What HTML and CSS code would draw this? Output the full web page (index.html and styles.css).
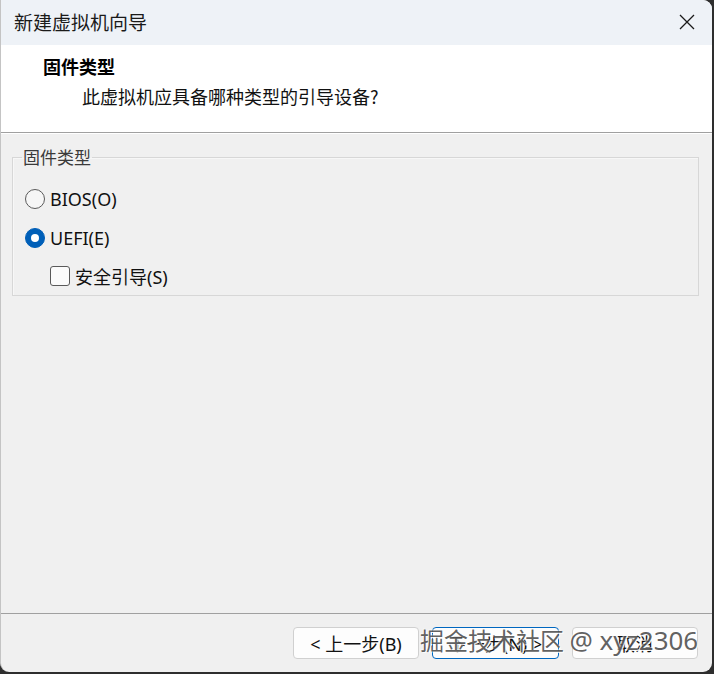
FILE: index.html
```html
<!DOCTYPE html>
<html lang="zh-CN">
<head>
<meta charset="utf-8">
<title>新建虚拟机向导</title>
<link rel="stylesheet" href="styles.css">
</head>
<body>
<div class="window">
  <div class="titlebar">
    <span class="title">新建虚拟机向导</span>
    <svg class="close" width="16" height="16" viewBox="0 0 16 16"><path d="M1 1 L15 15 M15 1 L1 15" stroke="#1a1a1a" stroke-width="1.3" fill="none"/></svg>
  </div>
  <div class="header">
    <h1 class="h-title">固件类型</h1>
    <p class="h-sub">此虚拟机应具备哪种类型的引导设备?</p>
  </div>
  <div class="content">
    <fieldset class="group">
      <legend class="legend">固件类型</legend>
      <div class="opt">
        <span class="radio"></span><span class="label">BIOS(O)</span>
      </div>
      <div class="opt">
        <span class="radio checked"></span><span class="label">UEFI(E)</span>
      </div>
      <div class="opt sub">
        <span class="check"></span><span class="label">安全引导(S)</span>
      </div>
    </fieldset>
  </div>
  <div class="footer">
    <button class="btn">&lt; 上一步(B)</button>
    <button class="btn default">下一步(N) &gt;</button>
    <button class="btn">取消</button>
    <span class="watermark">掘金技术社区 <span class="wm-latin">@ xyz2306</span></span>
  </div>
</div>
</body>
</html>
```
FILE: styles.css
```css
html, body {
  margin: 0;
  padding: 0;
}
body {
  background: #2e2e2e;
  width: 714px;
  height: 674px;
  overflow: hidden;
  font-family: "Noto Sans", "Noto Sans CJK SC", sans-serif;
}
.window {
  width: 711px;
  height: 672px;
  background: #f0f0f0;
  border-left: 1px solid #c4c4c4;
  border-radius: 0 9px 9px 9px;
  overflow: hidden;
  display: flex;
  flex-direction: column;
  position: relative;
}
.titlebar {
  height: 45px;
  flex: none;
  background: #eef2f7;
  display: flex;
  align-items: center;
  justify-content: space-between;
  padding: 0 17px 0 13px;
}
.title {
  font-family: "Noto Sans CJK SC", sans-serif;
  font-size: 19px;
  color: #1a1a1a;
  line-height: 1;
  margin-top: -2px;
}
.close {
  margin-top: -1px;
}
.header {
  height: 88px;
  flex: none;
  background: #ffffff;
  padding: 9px 0 0 42px;
  box-sizing: border-box;
  border-bottom: 1px solid #a0a0a0;
}
.h-title {
  margin: 0;
  font-family: "Noto Sans CJK SC", sans-serif;
  font-size: 18px;
  font-weight: 700;
  line-height: 24px;
  color: #000;
}
.h-sub {
  margin: 6px 0 0 39px;
  font-family: "Noto Sans CJK SC", sans-serif;
  font-size: 18px;
  line-height: 24px;
  color: #111;
}
.content {
  flex: 1;
  padding: 13px 13px 0 11px;
  border-top: 1px solid #ffffff;
}
.group {
  margin: 0;
  height: 149px;
  box-sizing: border-box;
  border: 1px solid #d7d7d7;
  box-shadow: inset 1px 1px 0 #f7f7f7;
  padding: 13px 0 0 12px;
}
.legend {
  font-family: "Noto Sans CJK SC", sans-serif;
  font-size: 17px;
  color: #3a3a3a;
  padding: 0 1px;
  margin-left: -3px;
  line-height: 20px;
}
.opt {
  display: flex;
  align-items: center;
  height: 38.5px;
}
.opt.sub {
  padding-left: 25px;
}
.radio {
  width: 18px;
  height: 18px;
  border: 1px solid #5a5a5a;
  border-radius: 50%;
  background: #f6f6f6;
  box-sizing: content-box;
  flex: none;
  position: relative;
}
.radio.checked {
  border-color: #005fb8;
  background: #005fb8;
}
.radio.checked::after {
  content: "";
  position: absolute;
  left: 5px;
  top: 5px;
  width: 8px;
  height: 8px;
  border-radius: 50%;
  background: #ffffff;
}
.check {
  width: 18px;
  height: 18px;
  border: 1px solid #5a5a5a;
  border-radius: 3px;
  background: #fbfbfb;
  flex: none;
}
.label {
  margin-left: 5px;
  font-family: "Noto Sans", "Noto Sans CJK SC", sans-serif;
  font-size: 18px;
  color: #111;
}
.footer {
  height: 59px;
  flex: none;
  border-top: 1px solid #a0a0a0;
  box-sizing: border-box;
  display: flex;
  justify-content: flex-end;
  align-items: flex-start;
  gap: 13px;
  padding: 13px 14px 0 0;
  position: relative;
}
.btn {
  width: 126px;
  height: 32px;
  background: #fdfdfd;
  border: 1px solid #d0d0d0;
  border-radius: 4px;
  font-family: "Noto Sans", "Noto Sans CJK SC", sans-serif;
  font-size: 18px;
  color: #111;
  padding: 0;
}
.btn.default {
  width: 127px;
  border-color: #0067c0;
}
.watermark {
  position: absolute;
  left: 419px;
  top: 8px;
  font-family: "Noto Sans CJK SC", sans-serif;
  font-size: 24px;
  color: rgba(70, 70, 70, 0.85);
  text-shadow: 1px 1px 0 rgba(255, 255, 255, 0.9), -1px -1px 0 rgba(255, 255, 255, 0.5);
  white-space: nowrap;
  pointer-events: none;
}
.wm-latin {
  font-family: "Noto Sans", sans-serif;
  font-size: 26px;
}
```
